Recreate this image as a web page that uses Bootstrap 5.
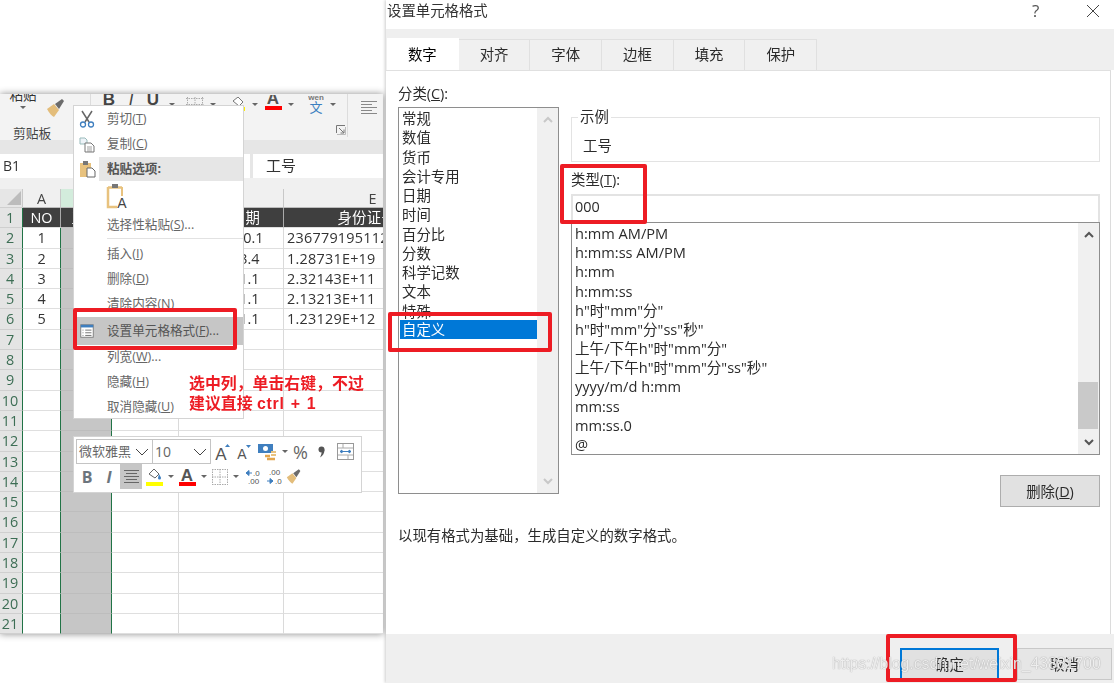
<!DOCTYPE html>
<html lang="zh"><head><meta charset="utf-8"><title>设置单元格格式</title>
<link href="https://cdn.jsdelivr.net/npm/bootstrap@5.3.0/dist/css/bootstrap.min.css" rel="stylesheet">
<style>
html,body{margin:0;background:#fff}
body{font-family:"Open Sans","Noto Sans CJK SC",sans-serif;font-size:14.4px;color:#2b2b2b;overflow:hidden}
.stage{position:relative;width:1114px;height:683px;overflow:hidden}
.xl-win{position:absolute;left:0;top:94px;width:383px;height:540px;background:#fff;box-shadow:0 0 7px rgba(0,0,0,.45);overflow:hidden;font-size:13px;filter:blur(.3px)}
.rb{height:46px;background:#f3f3f3;overflow:hidden}
.rb-g1{width:91px;border-right:1px solid #dcdcdc;height:43px;position:relative}
.rb-paste{width:46px;text-align:center;line-height:14px;margin-top:-6px;color:#333;font-size:13.5px}
.rb-label{font-size:12.8px;text-align:left;padding-left:13px;margin-top:7px;color:#444;line-height:16px}
.rb-tools{display:grid;grid-template-columns:7px 22px 22px 22px 16px 4px 22px 14px 6px 24px 10px 26px 10px 10px 20px 14px 8px;height:16px;align-items:center;justify-items:center}
.rb-g2{width:257px;height:43px;border-right:1px solid #dcdcdc;display:flex;flex-direction:column;justify-content:space-between}
.bk{font:700 17px/16px "Liberation Sans",sans-serif;color:#444;margin-top:-8px}
.tri{width:0;height:0;border:3px solid transparent;border-top:3.5px solid #666;border-bottom:0}
.launch{align-self:flex-end;margin:0 1px 2px 0;width:10px;height:10px}
.rb-g3{padding:3px 0 0 12px}
.fbar{height:49px;background:#e6e6e6;padding-top:14px;border-bottom:11px solid #f0f0f0;gap:3px}
.namebox{width:250px;height:24px;background:#fff;padding-left:3px;line-height:23px;font-size:14px;color:#333}
.fmla{flex:1;height:24px;background:#fff;padding-left:13px;line-height:23px;font-size:15px;color:#333}
.sh{display:grid;grid-template-columns:23px 38px 51px 67px 105px 178px;grid-template-rows:19px repeat(21,20.3px);font-size:14.4px;color:#333;line-height:19px;text-align:center}
.sh>div{border-right:1px solid #dadada;border-bottom:1px solid #dfdfdf;overflow:hidden;white-space:nowrap}
.sh>div:nth-child(6n+1){background:#e4e4e4;color:#3d6e55;border-right:1px solid #217346;padding-right:2px;border-bottom-color:#cfcfcf}
.sh>div:nth-child(6n+2){border-right:1px solid #217346}
.sh>div:nth-child(6n+3){background:#c6c6c6;border-right:1px solid #217346;border-bottom-color:#bdbdbd}
.sh>div:nth-child(6n){text-align:left;padding-left:3px;letter-spacing:.25px}
.sh>.colh{background:#f0f0f0!important;color:#444!important;border-right:1px solid #c8c8c8!important;border-bottom:1px solid #bbb;text-align:center!important;padding:0!important}
.sh>.colh.seln{background:#d3ecdc!important}
.sh>.cnr{background:#e6e6e6!important;position:relative}
.sh>.cnr::after{content:"";position:absolute;right:1px;bottom:2px;border:7px solid #bcbcbc;border-top-color:transparent;border-left-color:transparent}
.sh>.dk{background:#3f3f3f!important;color:#fff;border-right-color:#aaa!important}
.ctx{position:absolute;left:73px;top:105px;width:171px;height:314px;background:#fff;border:1px solid #d4d4d4;font-size:12.6px;color:#666}
.ctx-i{display:flex;align-items:center;height:25px;padding-left:33px;white-space:nowrap}
.ctx-i.first{height:26px}
.ctx-i svg.mi{position:absolute;left:5px}
.ctx-hd{background:#e6e6e6;height:24px;margin-left:25px;padding-left:8px;font-weight:700;color:#555;display:flex;align-items:center}
.ctx-hd svg{position:absolute;left:5px}
.ctx-cur{background:#c6c6c6;height:28px;color:#555}
.ctx-rule{height:1px;background:#e2e2e2;margin:0 0 3px 33px}
.ctx-ic{height:32px;padding-left:32px}
.ctx-ic text{font:14px "Liberation Sans",sans-serif;fill:#444}
.mini{position:absolute;left:73px;top:436px;width:289px;height:57px;background:#fff;border:1px solid #d4d4d4;padding:2px}
.mini-row{display:flex;align-items:center;height:25px}
.sel{height:25px;border:1px solid #c4c4c4;display:flex;align-items:center;justify-content:space-between;font-size:13px;color:#666;padding:0 3px 0 2px}
.sel-a{width:77px}.sel-b{width:59px;margin-left:-1px;font-size:14px}
.mic{display:flex;align-items:center;justify-content:center;flex:none;height:25px}
.w21{width:21px}.w22{width:22px}.w16{width:16px}.w10{width:10px}.w26{width:26px}.w18{width:18px}.w14{width:14px}.w24{width:24px}
.pct{font-size:18px;color:#666;line-height:1}
.alignbox{background:#c6c6c6}
.dlg{position:absolute;left:386px;top:0;width:728px;height:683px;background:#fff;display:flex;flex-direction:column;box-shadow:-1px 0 3px rgba(0,0,0,.2);filter:blur(.25px)}
.ttl{height:29px;padding-left:1px;line-height:22px;flex:none;color:#333}
.ttl-q{position:absolute;left:646px;top:1px;font-size:17px;color:#555;line-height:20px}
.ttl-x{position:absolute;left:700px;top:4px}
.tabbar{background:#efefef;height:41px;padding:10px 0 0 1px;flex:none;border:0}
.tabbar .nav-link{width:71.7px;height:31px;padding:0;border:1px solid #e0e0e0;border-bottom:0;border-left:0;border-radius:0;background:#f0f0f0;color:#2b2b2b;text-align:center;line-height:30px;font-size:14.4px;margin:0}
.tabbar .nav-link.active{background:#fff;border-color:#fff;height:32px;margin-top:-1px;line-height:32px}
.body-p{flex:1;background:#fff;border-top:1px solid #e0e0e0;border-right:1px solid #dcdcdc;margin-right:3px;padding:13px 0 0 12px;min-height:0}
.lab{line-height:19px;height:23px}
.cats{width:161px;height:387px;border:1px solid #8e8e8e;display:flex}
.cats .list-group{flex:1;padding:1px 0 0 1px;border-radius:0}
.cats .list-group-item{padding-left:2px}
.lst .list-group-item{border:0;background:transparent;padding-top:0;padding-right:0;padding-bottom:0;height:19.27px;line-height:19px;font-size:14.4px;color:#2b2b2b;border-radius:0;white-space:nowrap;overflow:hidden}
.fmts .list-group-item{padding-left:3px;font-size:14.6px}
.lst .list-group-item.active{background:#0078d7;color:#fff}
.sb{width:21px;flex:none;background:#f0f0f0;display:flex;flex-direction:column;justify-content:space-between;align-items:center;padding:8px 0;position:relative}
.sb-thumb{position:absolute;left:0;right:1px;top:159px;height:47px;background:#c9c9c9}
.rcol{width:529px;margin-left:12px}
.fs{border:1px solid #e3e3e3;height:55px;margin:23px 0 0;min-width:0;padding:0 0 0 11px;display:block}
.fs legend{float:none;width:auto;font-size:14.4px;margin:0 0 0 -5px;padding:0 2px;line-height:20px;background:#fff}
.fs-v{line-height:20px;margin-top:9px}
.typ{padding-top:7px}
.typ-lab{line-height:21px;height:25px}
.typ-in{height:28px;border:2px solid #e3e3e3;border-bottom:0;border-radius:0;padding:0 0 5px 2px;font-size:14.4px;color:#2b2b2b;box-shadow:none;background:#fff;font-family:inherit}
.fmts{height:233px;border:1px solid #8e8e8e;display:flex}
.fmts .list-group{flex:1;min-width:0;padding-top:1px}
.btn-xl{background:#e1e1e1;border:1px solid #adadad;border-radius:0;color:#2b2b2b;font-size:14.4px;padding:0;width:100px;height:32px;line-height:29px}
.del{margin-top:20px}
.desc{margin-top:19px;line-height:20px}
.ft{height:49px;background:#efefef;flex:none;padding:14px 2px 0 0;gap:18px;align-items:flex-start}
.ok{width:99px;border:2px solid #0078d7}
.cancel{width:95px;border-color:#c8c8c8;background:#e6e6e6}
.ann{position:absolute;border:4.5px solid #ed1c24;border-radius:2px;pointer-events:none}
.ann1{left:73px;top:308px;width:164px;height:42px}
.ann2{left:560px;top:164px;width:87px;height:60px}
.ann3{left:388px;top:312px;width:164px;height:40px}
.ann4{left:886px;top:634px;width:131px;height:48px}
.note{position:absolute;left:189px;top:374px;color:#ed1c24;font-weight:700;font-size:15.9px;line-height:19.5px;font-family:"Liberation Sans","Noto Sans CJK SC",sans-serif;white-space:nowrap}
.note-lat{letter-spacing:.7px;word-spacing:1px}
.wm{position:absolute;left:832px;top:652px;font:15.8px/24px "Liberation Sans",sans-serif;color:rgba(255,255,255,.85);text-shadow:0 0 1px rgba(90,90,90,.75);white-space:nowrap}
u{text-underline-offset:1px}
</style></head><body>
<div class="stage">

<div class="xl-win">
  <div class="rb d-flex">
    <div class="rb-g1">
      <div class="d-flex">
        <div class="rb-paste">粘贴<div class="d-flex justify-content-center mt-1"><span class="tri"></span></div></div>
        <svg width="20" height="20" viewBox="0 0 20 20" class="mt-1"><path d="M1 11l7-5 5 6-5 7C6 18 3 15 1 11z" fill="#e3bd7b"/><path d="M9 6l7-5 2 2-5 8z" fill="#6b6b6b"/></svg>
      </div>
      <div class="rb-label">剪贴板</div>
    </div>
    <div class="rb-g2">
      <div class="rb-tools">
        <span></span><span class="bk">B</span><span class="bk fst-italic fw-normal">I</span><span class="bk text-decoration-underline">U</span><span class="tri"></span><span></span>
        <svg width="18" height="14" viewBox="0 0 18 14"><path d="M1.500 0v14M9 0v14M16.500 0v14M0 1.500h18M0 7.500h18" stroke="#aaa" stroke-dasharray="1.500 1" fill="none"/></svg>
        <span class="tri"></span><span></span>
        <svg width="18" height="15" viewBox="0 0 18 15"><path d="M4 4l5-4 5 5-4 4z" fill="#fff" stroke="#777"/><rect x="1" y="10" width="15" height="4" fill="#fff200"/></svg>
        <span class="tri"></span>
        <svg width="20" height="18" viewBox="0 0 20 18"><text x="10" y="9" text-anchor="middle" font-family="Liberation Sans" font-size="17" font-weight="700" fill="#555">A</text><rect x="2" y="11" width="17" height="4" fill="#f00"/></svg>
        <span class="tri"></span><span></span>
        <svg width="16" height="20" viewBox="0 0 16 20"><text x="8" y="6" text-anchor="middle" font-family="Liberation Sans" font-size="8" font-weight="700" fill="#777">wen</text><text x="8" y="18" text-anchor="middle" font-family="Noto Sans CJK SC" font-size="13" fill="#3b7fc0">文</text></svg>
        <span class="tri"></span><span></span>
      </div>
      <svg class="launch" viewBox="0 0 10 10"><path d="M.5 8V.5H9M3 3l5 5M8 4.500V8H4.500" fill="none" stroke="#777"/><path d="M1 9.500h8.500V2" fill="none" stroke="#bbb"/></svg>
    </div>
    <div class="rb-g3">
      <svg width="18" height="14" viewBox="0 0 18 14"><path d="M1 .5h16M1 3.500h11M1 6.500h16M1 9.500h11M1 12.500h16" stroke="#888" fill="none"/></svg>
    </div>
  </div>
  <div class="fbar d-flex">
    <div class="namebox">B1</div>
    <div class="fmla">工号</div>
  </div>
  <div class="sh">
    <div class="colh cnr"></div><div class="colh">A</div><div class="colh seln">B</div><div class="colh">C</div><div class="colh">D</div><div class="colh">E</div>
    <div>1</div><div class="dk">NO</div><div class="dk">工号</div><div class="dk">姓名</div><div class="dk">入职日期</div><div class="dk text-center">身份证号码</div>
    <div>2</div><div>1</div><div></div><div></div><div>2020.10.1</div><div>236779195112</div>
    <div>3</div><div>2</div><div></div><div></div><div>2015.3.4</div><div>1.28731E+19</div>
    <div>4</div><div>3</div><div></div><div></div><div>2020.1.1</div><div>2.32143E+11</div>
    <div>5</div><div>4</div><div></div><div></div><div>2020.1.1</div><div>2.13213E+11</div>
    <div>6</div><div>5</div><div></div><div></div><div>2020.1.1</div><div>1.23129E+12</div>
    <div>7</div><div></div><div></div><div></div><div></div><div></div>
    <div>8</div><div></div><div></div><div></div><div></div><div></div>
    <div>9</div><div></div><div></div><div></div><div></div><div></div>
    <div>10</div><div></div><div></div><div></div><div></div><div></div>
    <div>11</div><div></div><div></div><div></div><div></div><div></div>
    <div>12</div><div></div><div></div><div></div><div></div><div></div>
    <div>13</div><div></div><div></div><div></div><div></div><div></div>
    <div>14</div><div></div><div></div><div></div><div></div><div></div>
    <div>15</div><div></div><div></div><div></div><div></div><div></div>
    <div>16</div><div></div><div></div><div></div><div></div><div></div>
    <div>17</div><div></div><div></div><div></div><div></div><div></div>
    <div>18</div><div></div><div></div><div></div><div></div><div></div>
    <div>19</div><div></div><div></div><div></div><div></div><div></div>
    <div>20</div><div></div><div></div><div></div><div></div><div></div>
    <div>21</div><div></div><div></div><div></div><div></div><div></div>
  </div>
</div>

<div class="ctx">
  <div class="ctx-i first">
    <svg class="mi" width="16" height="18" viewBox="0 0 16 18"><path d="M3 1l7 11M13 1L6 12" stroke="#666" stroke-width="1.500" fill="none"/><circle cx="4" cy="14.500" r="2.500" fill="none" stroke="#3f7fbf" stroke-width="1.300"/><circle cx="12" cy="14.500" r="2.500" fill="none" stroke="#3f7fbf" stroke-width="1.300"/></svg>
    剪切(<u>T</u>)
  </div>
  <div class="ctx-i">
    <svg class="mi" width="16" height="16" viewBox="0 0 16 16"><path d="M1 1h5l2 2v4H1z" fill="#eef3f8" stroke="#9bb"/><path d="M6 6h6l3 3v6H6z" fill="#fff" stroke="#777"/><path d="M8 10h5M8 12h5M8 14h5" stroke="#888" stroke-width=".8"/></svg>
    复制(<u>C</u>)
  </div>
  <div class="ctx-hd">
    <svg width="17" height="18" viewBox="0 0 17 18"><rect x="1" y="3" width="11" height="14" fill="#e8c27e"/><rect x="4" y="1" width="5" height="4" fill="#777"/><path d="M8 8h5l3 3v6H8z" fill="#fff" stroke="#666"/></svg>
    粘贴选项:
  </div>
  <div class="ctx-ic">
    <svg width="24" height="30" viewBox="0 0 24 30"><path d="M2 6.500h14M2 6v20h9" fill="none" stroke="#e8c27e" stroke-width="2.500"/><path d="M16 6v9" stroke="#e8c27e" stroke-width="2"/><rect x="6" y="3" width="6" height="4" fill="#777"/><text x="16" y="27" text-anchor="middle">A</text></svg>
  </div>
  <div class="ctx-i">选择性粘贴(<u>S</u>)...</div>
  <div class="ctx-rule"></div>
  <div class="ctx-i">插入(<u>I</u>)</div>
  <div class="ctx-i">删除(<u>D</u>)</div>
  <div class="ctx-i">清除内容(<u>N</u>)</div>
  <div class="ctx-i ctx-cur">
    <svg class="mi" width="16" height="16" viewBox="0 0 18 18"><rect x="2" y="2" width="14" height="14" fill="#fff" stroke="#777"/><rect x="2" y="2" width="14" height="3" fill="#3f7fbf"/><path d="M4 8h1M7 8h7M4 11h1M7 11h7M4 14h1M7 14h7" stroke="#666"/></svg>
    设置单元格格式(<u>F</u>)...
  </div>
  <div class="ctx-i">列宽(<u>W</u>)...</div>
  <div class="ctx-i">隐藏(<u>H</u>)</div>
  <div class="ctx-i">取消隐藏(<u>U</u>)</div>
</div>

<div class="mini">
  <div class="mini-row">
    <div class="sel sel-a"><span>微软雅黑</span><svg width="14" height="8" viewBox="0 0 14 8"><path d="M1 1l6 6 6-6" fill="none" stroke="#444"/></svg></div>
    <div class="sel sel-b"><span>10</span><svg width="14" height="8" viewBox="0 0 14 8"><path d="M1 1l6 6 6-6" fill="none" stroke="#444"/></svg></div>
    <div class="mic w22"><svg width="17" height="18" viewBox="0 0 17 18"><text x="7" y="17" text-anchor="middle" font-family="Liberation Sans" font-size="17" fill="#555">A</text><path d="M11 4l2.500-3L16 4z" fill="#3f7fbf"/></svg></div>
    <div class="mic w21"><svg width="15" height="16" viewBox="0 0 15 16"><text x="6" y="15" text-anchor="middle" font-family="Liberation Sans" font-size="14" fill="#555">A</text><path d="M10 1h5l-2.500 3z" fill="#3f7fbf"/></svg></div>
    <div class="mic w26"><svg width="20" height="20" viewBox="0 0 20 20"><rect x="1" y="2" width="15" height="9" fill="#3f7fbf"/><circle cx="8.500" cy="6.500" r="2.500" fill="#fff"/><path d="M8 14h5M10 17h8" stroke="#e3a64f" stroke-width="2.500"/><path d="M14 10h5M14 13h5" stroke="#e8c27e" stroke-width="2"/></svg></div>
    <div class="mic w10"><span class="tri"></span></div>
    <div class="mic w21"><span class="pct">%</span></div>
    <div class="mic w21"><svg width="7" height="12" viewBox="0 0 7 12"><circle cx="3.500" cy="3.500" r="3" fill="#555"/><path d="M6.500 3.500C6.500 7 5 10 2 11.500c1-2 1.500-3.500 1.500-5z" fill="#555"/></svg></div>
    <div class="mic w26"><svg width="17" height="17" viewBox="0 0 17 17"><rect x=".5" y=".5" width="16" height="16" fill="#fff" stroke="#999"/><path d="M1 5h15M1 12h15M6 1v4M11 12v4" stroke="#aaa"/><path d="M3 8.500h11M3 8.500l2-1.500v3zM14 8.500l-2-1.500v3z" stroke="#3f7fbf" fill="#3f7fbf"/></svg></div>
  </div>
  <div class="mini-row">
    <div class="mic w22"><span class="fw-bold fs-6 text-secondary lh-1">B</span></div>
    <div class="mic w22"><span class="fw-bold fst-italic fs-6 text-secondary lh-1">I</span></div>
    <div class="mic w22 alignbox"><svg width="15" height="14" viewBox="0 0 15 14"><path d="M0 .5h15M2 3.500h11M0 6.500h15M2 9.500h11M0 12.500h15" stroke="#666" fill="none"/></svg></div>
    <div class="mic w24"><svg width="19" height="20" viewBox="0 0 19 20"><path d="M4 7l5-5 5 5-4 4z" fill="#fff" stroke="#666"/><path d="M14 7c1 2 2 3 2 4a1.500 1.500 0 0 1-3 0z" fill="#3f7fbf"/><rect x="1" y="15" width="17" height="4" fill="#ff0"/></svg></div>
    <div class="mic w10"><span class="tri"></span></div>
    <div class="mic w21"><svg width="18" height="20" viewBox="0 0 18 20"><text x="9" y="14" text-anchor="middle" font-family="Liberation Sans" font-size="17" font-weight="700" fill="#555">A</text><rect x="1" y="15" width="17" height="4" fill="#f00"/></svg></div>
    <div class="mic w14"><span class="tri"></span></div>
    <div class="mic w18"><svg width="16" height="16" viewBox="0 0 16 16"><path d="M.5 0v16M8 0v16M15.500 0v16M0 .5h16M0 8h16M0 15.500h16" stroke="#aaa" stroke-dasharray="1.500 1" fill="none"/></svg></div>
    <div class="mic w14"><span class="tri"></span></div>
    <div class="mic w21"><svg width="18" height="18" viewBox="0 0 18 18"><path d="M1 5h6M1 5l3-2.500v5z" stroke="#3f7fbf" fill="#3f7fbf"/><text x="8" y="8" font-family="Liberation Sans" font-size="8" fill="#555">.0</text><text x="3" y="16" font-family="Liberation Sans" font-size="8" fill="#555">.00</text></svg></div>
    <div class="mic w22"><svg width="18" height="18" viewBox="0 0 18 18"><text x="3" y="7" font-family="Liberation Sans" font-size="8" fill="#555">.00</text><path d="M1 13h6M7 13l-3-2.500v5z" stroke="#3f7fbf" fill="#3f7fbf"/><text x="9" y="16" font-family="Liberation Sans" font-size="8" fill="#555">.0</text></svg></div>
    <div class="mic w16"><svg width="17" height="17" viewBox="0 0 20 20"><path d="M1 11l7-5 5 6-5 7C6 18 3 15 1 11z" fill="#e3bd7b"/><path d="M9 6l7-5 2 2-5 8z" fill="#6b6b6b"/></svg></div>
  </div>
</div>

<div class="note">选中列，单击右键，不过<br>建议直接 <span class="note-lat">ctrl + 1</span></div>

<div class="dlg">
  <div class="ttl">设置单元格格式</div>
  <span class="ttl-q">?</span>
  <svg class="ttl-x" width="14" height="14" viewBox="0 0 14 14"><path d="M1 1l12 12M13 1L1 13" stroke="#444" fill="none"/></svg>
  <ul class="nav nav-tabs tabbar">
    <li class="nav-item"><a class="nav-link active" href="#">数字</a></li>
    <li class="nav-item"><a class="nav-link" href="#">对齐</a></li>
    <li class="nav-item"><a class="nav-link" href="#">字体</a></li>
    <li class="nav-item"><a class="nav-link" href="#">边框</a></li>
    <li class="nav-item"><a class="nav-link" href="#">填充</a></li>
    <li class="nav-item"><a class="nav-link" href="#">保护</a></li>
  </ul>
  <div class="body-p">
    <div class="d-flex">
      <div>
        <div class="lab">分类(<u>C</u>):</div>
        <div class="cats lst">
          <div class="list-group">
            <div class="list-group-item">常规</div><div class="list-group-item">数值</div><div class="list-group-item">货币</div><div class="list-group-item">会计专用</div><div class="list-group-item">日期</div><div class="list-group-item">时间</div><div class="list-group-item">百分比</div><div class="list-group-item">分数</div><div class="list-group-item">科学记数</div><div class="list-group-item">文本</div><div class="list-group-item">特殊</div><div class="list-group-item active">自定义</div>
          </div>
          <div class="sb">
            <svg width="10" height="7" viewBox="0 0 10 7"><path d="M1 6l4-4 4 4" fill="none" stroke="#c8c8c8" stroke-width="2"/></svg>
            <svg width="10" height="7" viewBox="0 0 10 7"><path d="M1 1l4 4 4-4" fill="none" stroke="#c8c8c8" stroke-width="2"/></svg>
          </div>
        </div>
      </div>
      <div class="rcol">
        <fieldset class="fs"><legend>示例</legend><div class="fs-v">工号</div></fieldset>
        <div class="typ">
          <div class="typ-lab">类型(<u>T</u>):</div>
          <input class="form-control typ-in" type="text" value="000">
          <div class="fmts lst">
            <div class="list-group">
              <div class="list-group-item">h:mm AM/PM</div><div class="list-group-item">h:mm:ss AM/PM</div><div class="list-group-item">h:mm</div><div class="list-group-item">h:mm:ss</div><div class="list-group-item">h"时"mm"分"</div><div class="list-group-item">h"时"mm"分"ss"秒"</div><div class="list-group-item">上午/下午h"时"mm"分"</div><div class="list-group-item">上午/下午h"时"mm"分"ss"秒"</div><div class="list-group-item">yyyy/m/d h:mm</div><div class="list-group-item">mm:ss</div><div class="list-group-item">mm:ss.0</div><div class="list-group-item">@</div>
            </div>
            <div class="sb">
              <svg width="10" height="7" viewBox="0 0 10 7"><path d="M1 6l4-4 4 4" fill="none" stroke="#555" stroke-width="2"/></svg>
              <div class="sb-thumb"></div>
              <svg width="10" height="7" viewBox="0 0 10 7"><path d="M1 1l4 4 4-4" fill="none" stroke="#555" stroke-width="2"/></svg>
            </div>
          </div>
        </div>
        <div class="del d-flex justify-content-end"><button class="btn btn-xl" type="button">删除(<u>D</u>)</button></div>
      </div>
    </div>
    <div class="desc">以现有格式为基础，生成自定义的数字格式。</div>
  </div>
  <div class="ft d-flex justify-content-end">
    <button class="btn btn-xl ok" type="button">确定</button>
    <button class="btn btn-xl cancel" type="button">取消</button>
  </div>
</div>

<div class="ann ann1"></div>
<div class="ann ann2"></div>
<div class="ann ann3"></div>
<div class="ann ann4"></div>
<div class="wm">https://blog.csdn.net/weixin_43881700</div>
</div>
</body></html>
